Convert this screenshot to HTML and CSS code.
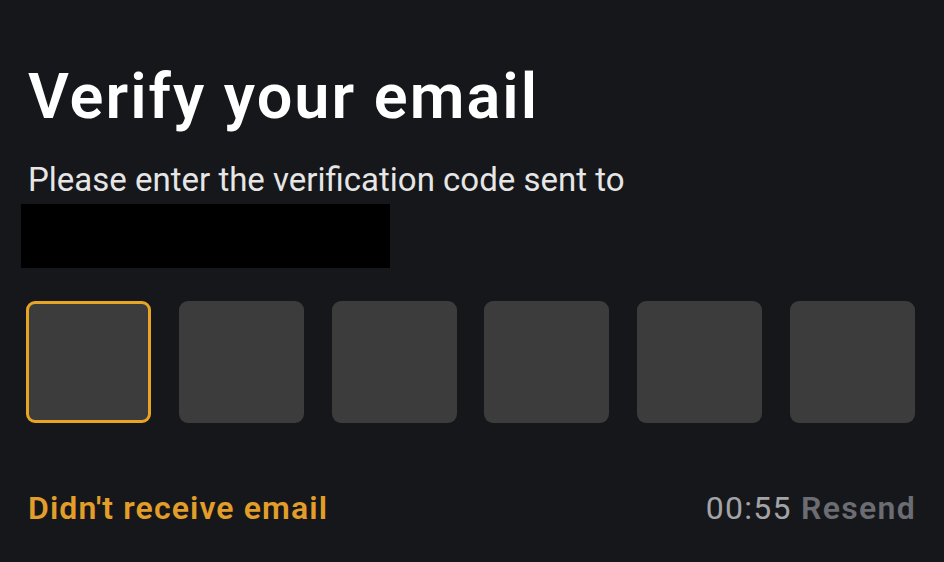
FILE: index.html
```html
<!DOCTYPE html>
<html lang="en">
<head>
  <meta charset="UTF-8">
  <meta name="viewport" content="width=device-width, initial-scale=1.0">
  <title>Verify your email</title>
  <link rel="stylesheet" href="styles.css">
</head>
<body>
  <main class="verify">
    <h1 class="verify-title">Verify your email</h1>

    <p class="verify-text">Please enter the verification code sent to</p>
    <div class="email-mask"></div>

    <form class="code-form">
      <input class="code-box active" type="text" maxlength="1" aria-label="Digit 1">
      <input class="code-box" type="text" maxlength="1" aria-label="Digit 2">
      <input class="code-box" type="text" maxlength="1" aria-label="Digit 3">
      <input class="code-box" type="text" maxlength="1" aria-label="Digit 4">
      <input class="code-box" type="text" maxlength="1" aria-label="Digit 5">
      <input class="code-box" type="text" maxlength="1" aria-label="Digit 6">
    </form>

    <div class="verify-footer">
      <a class="no-email" href="#">Didn't receive email</a>
      <span class="resend-wrap">
        <span class="timer">00:55</span>
        <span class="resend">Resend</span>
      </span>
    </div>
  </main>
</body>
</html>
```

FILE: styles.css
```css
html, body {
  margin: 0;
  height: 100%;
}

body {
  background-color: #16171b;
  font-family: Roboto, "Noto Sans", sans-serif;
  color: #eaecef;
}

.verify {
  padding: 58px 29px 0 28px;
}

.verify-title {
  margin: 0;
  font-size: 63px;
  font-weight: 600;
  line-height: 78px;
  color: #ffffff;
  letter-spacing: 2px;
}

.verify-text {
  margin: 25px 0 0;
  font-size: 33px;
  line-height: 38px;
  color: #e6e6e6;
  letter-spacing: 0;
}

.email-mask {
  width: 369px;
  height: 64px;
  margin: 5px 0 0 -7px;
  background-color: #000000;
}

.code-form {
  display: flex;
  justify-content: space-between;
  margin-top: 33px;
}

.code-box {
  width: 125px;
  height: 122px;
  box-sizing: border-box;
  border: none;
  border-radius: 9px;
  background-color: #3c3c3c;
  padding: 0;
}

.code-box.active {
  border: 3px solid #e9a424;
  margin-left: -2px;
}

.verify-footer {
  display: flex;
  justify-content: space-between;
  align-items: baseline;
  margin-top: 66px;
  font-size: 32px;
}

.no-email {
  color: #e39e2a;
  font-weight: 600;
  text-decoration: none;
  letter-spacing: 1.1px;
}

.resend-wrap {
  letter-spacing: 1.3px;
  margin-right: -1px;
}

.timer {
  color: #a3a4a8;
}

.resend {
  color: #6b6d72;
  font-weight: 600;
}
```
